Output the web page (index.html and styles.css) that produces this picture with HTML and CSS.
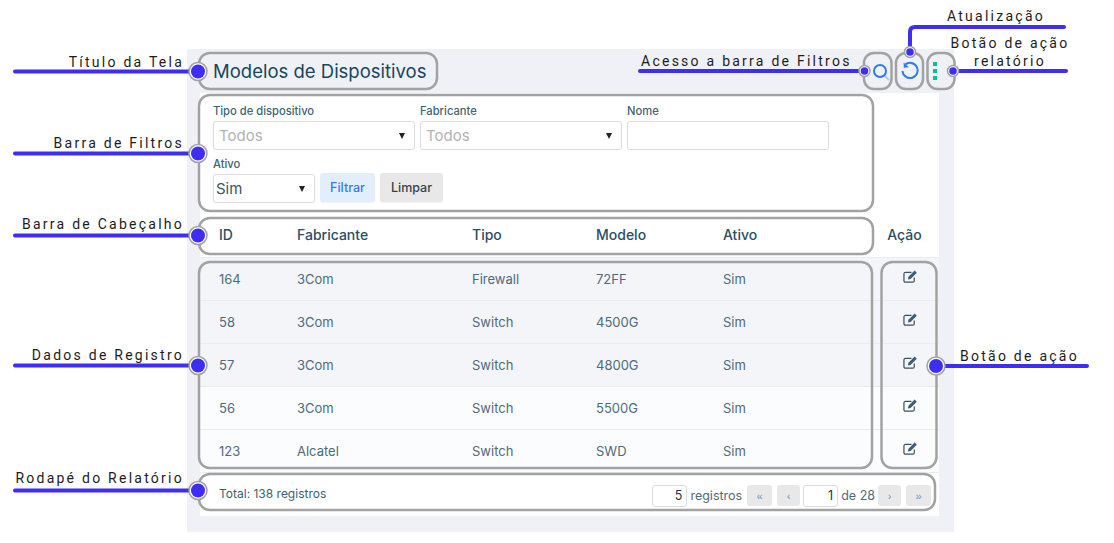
FILE: index.html
```html
<!DOCTYPE html>
<html lang="pt-BR">
<head>
  <meta charset="UTF-8">
  <title>Modelos de Dispositivos</title>
  <link rel="stylesheet" href="styles.css">
</head>
<body>
  <main class="panel">
    <header class="title-bar">
      <h1>Modelos de Dispositivos</h1>
      <div class="tools">
        <button type="button" class="tool tool-search" aria-label="Filtros">
          <svg class="tool-icon" width="20" height="20" viewBox="0 0 20 20" fill="none">
            <path d="M14.500 14.500l4.500 4.500" stroke="#b3caf2" stroke-width="1.800"/>
            <circle cx="10" cy="10" r="6" stroke="#2f7df0" stroke-width="2"/>
          </svg>
        </button>
        <button type="button" class="tool tool-refresh" aria-label="Atualizar">
          <svg width="20" height="20" viewBox="0 0 20 20" fill="none">
            <path d="M5.200 3.600A7.600 7.600 0 1 1 2.500 10" stroke="#2f7df0" stroke-width="2"/>
            <path d="M3.600 1.600l.2 5.200 5-.6z" fill="#2f7df0"/>
          </svg>
        </button>
        <button type="button" class="tool tool-more" aria-label="Mais">
          <span class="dot"></span><span class="dot"></span><span class="dot"></span>
        </button>
      </div>
    </header>

    <section class="card">
      <form class="filters">
        <div class="field">
          <label for="tipo">Tipo de dispositivo</label>
          <div class="select">
            <select id="tipo" class="empty"><option>Todos</option></select>
          </div>
        </div>
        <div class="field">
          <label for="fabricante">Fabricante</label>
          <div class="select">
            <select id="fabricante" class="empty"><option>Todos</option></select>
          </div>
        </div>
        <div class="field">
          <label for="nome">Nome</label>
          <input id="nome" type="text">
        </div>
        <div class="field field-small">
          <label for="ativo">Ativo</label>
          <div class="select">
            <select id="ativo"><option>Sim</option></select>
          </div>
        </div>
        <button type="button" class="btn btn-filter">Filtrar</button>
        <button type="button" class="btn btn-clear">Limpar</button>
      </form>

      <table class="grid">
        <colgroup>
          <col class="col-id"><col class="col-fab"><col class="col-tipo"><col class="col-modelo"><col class="col-ativo"><col class="col-acao">
        </colgroup>
        <thead>
          <tr><th>ID</th><th>Fabricante</th><th>Tipo</th><th>Modelo</th><th>Ativo</th><th class="action">Ação</th></tr>
        </thead>
        <tbody>
          <tr class="shade">
            <td>164</td><td>3Com</td><td>Firewall</td><td>72FF</td><td>Sim</td>
            <td class="action"><svg class="edit" viewBox="0 0 16 16"><use href="#edit"/></svg></td>
          </tr>
          <tr class="shade">
            <td>58</td><td>3Com</td><td>Switch</td><td>4500G</td><td>Sim</td>
            <td class="action"><svg class="edit" viewBox="0 0 16 16"><use href="#edit"/></svg></td>
          </tr>
          <tr class="shade">
            <td>57</td><td>3Com</td><td>Switch</td><td>4800G</td><td>Sim</td>
            <td class="action"><svg class="edit" viewBox="0 0 16 16"><use href="#edit"/></svg></td>
          </tr>
          <tr>
            <td>56</td><td>3Com</td><td>Switch</td><td>5500G</td><td>Sim</td>
            <td class="action"><svg class="edit" viewBox="0 0 16 16"><use href="#edit"/></svg></td>
          </tr>
          <tr>
            <td>123</td><td>Alcatel</td><td>Switch</td><td>SWD</td><td>Sim</td>
            <td class="action"><svg class="edit" viewBox="0 0 16 16"><use href="#edit"/></svg></td>
          </tr>
        </tbody>
      </table>

      <footer class="report-foot">
        <span class="total">Total: 138 registros</span>
        <div class="pager">
          <input class="num num-size" type="text" value="5" aria-label="Registros por página">
          <span class="pager-text">registros</span>
          <button type="button" class="page page-wide page-first">«</button>
          <button type="button" class="page">‹</button>
          <input class="num" type="text" value="1" aria-label="Página">
          <span class="pager-text">de 28</span>
          <button type="button" class="page">›</button>
          <button type="button" class="page page-wide page-last">»</button>
        </div>
      </footer>
    </section>
  </main>

  <svg class="defs" width="0" height="0">
    <symbol id="edit" viewBox="0 0 16 16">
      <path d="M12 9v3.500a1.600 1.600 0 0 1-1.600 1.600H2.600A1.600 1.600 0 0 1 1 12.500V5.300a1.600 1.600 0 0 1 1.600-1.600h6.400" fill="none" stroke="#3f4f5c" stroke-width="1.300"/>
      <path d="M5.800 8.300l6.600-6.600 2.300 2.300-6.600 6.600-2.900.6z" fill="#3a5f7a"/>
    </symbol>
  </svg>

  <!-- anotacoes por cima da tela -->
  <svg class="notes" width="1114" height="543" viewBox="0 0 1114 543">
    <g class="frames">
      <rect x="199" y="53" width="238" height="36" rx="11"/>
      <rect x="199" y="95" width="674" height="116" rx="11"/>
      <rect x="199" y="218" width="674" height="36" rx="11"/>
      <rect x="199" y="262" width="673" height="206" rx="11"/>
      <rect x="881.500" y="262" width="55" height="206" rx="11"/>
      <rect x="199" y="474" width="736" height="36" rx="11"/>
      <rect x="864" y="53" width="27.500" height="36" rx="10"/>
      <rect x="896" y="53" width="27" height="36" rx="10"/>
      <rect x="927.500" y="53" width="27" height="36" rx="10"/>
    </g>
    <g class="leads">
      <path d="M15 71.500H198M15 153.500H198M15 235.500H198M15 365.500H198M15 490.500H198M936 366H1087M640 71H864M953 71H1066M1064 27H915Q910 27 910 32V52"/>
    </g>
    <g class="rings">
      <circle cx="198" cy="71.500" r="9"/>
      <circle cx="198" cy="153.500" r="9"/>
      <circle cx="198" cy="235.500" r="9"/>
      <circle cx="198" cy="365.500" r="9"/>
      <circle cx="198" cy="490.500" r="9"/>
      <circle cx="936" cy="366" r="9"/>
      <circle cx="864.500" cy="71" r="5.500"/>
      <circle cx="910" cy="52" r="5.500"/>
      <circle cx="953" cy="71" r="5.500"/>
    </g>
    <g class="knobs">
      <circle cx="198" cy="71.500" r="7"/>
      <circle cx="198" cy="153.500" r="7"/>
      <circle cx="198" cy="235.500" r="7"/>
      <circle cx="198" cy="365.500" r="7"/>
      <circle cx="198" cy="490.500" r="7"/>
      <circle cx="936" cy="366" r="7"/>
      <circle cx="864.500" cy="71" r="3.800"/>
      <circle cx="910" cy="52" r="3.800"/>
      <circle cx="953" cy="71" r="3.800"/>
    </g>
    <g class="note-text">
      <text x="184" y="67" text-anchor="end">Título da Tela</text>
      <text x="184" y="148" text-anchor="end">Barra de Filtros</text>
      <text x="184" y="229" text-anchor="end">Barra de Cabeçalho</text>
      <text x="184" y="360" text-anchor="end">Dados de Registro</text>
      <text x="184" y="483" text-anchor="end">Rodapé do Relatório</text>
      <text x="641" y="66">Acesso a barra de Filtros</text>
      <text x="947" y="21">Atualização</text>
      <text x="1010" y="48" text-anchor="middle">Botão de ação</text>
      <text x="1010" y="66" text-anchor="middle">relatório</text>
      <text x="960" y="361">Botão de ação</text>
    </g>
  </svg>
</body>
</html>
```

FILE: styles.css
```css
:root {
  --panel: #f0f1f7;
  --line: #e9ecef;
  --text: #4f6b7a;
  --head: #2a4f63;
  --control: #dcdcdc;
  --lead: #3d2df5;
  --frame: #a2a2a2;
}

* {
  box-sizing: border-box;
}

html, body {
  margin: 0;
  height: 100%;
  overflow: hidden;
}

body {
  position: relative;
  background: #fff;
  color: var(--text);
  font-family: Inter, "Open Sans", sans-serif;
  font-size: 13px;
}

.panel {
  width: 767px;
  height: 483px;
  margin: 49px 0 0 187px;
  padding: 0 15px 16px 13px;
  background: var(--panel);
}

.title-bar {
  display: flex;
  align-items: center;
  height: 44px;
  margin-right: -15px;
  padding-left: 13px;
  padding-right: 9px;
}

.title-bar h1 {
  margin: 0;
  font-size: 18.500px;
  font-weight: 400;
  color: #17475d;
}

.tools {
  display: flex;
  align-items: center;
  margin-left: auto;
}

.tool {
  display: flex;
  flex-direction: column;
  align-items: center;
  justify-content: center;
  padding: 0;
  border: 0;
  background: none;
}

.tool-icon {
  overflow: visible;
}

.tool-search {
  width: 30px;
}

.tool-refresh {
  width: 28px;
  margin-left: 1px;
}

.tool-more {
  width: 20px;
  margin-left: 1px;
  gap: 3px;
}

.dot {
  width: 4px;
  height: 4px;
  background: #00c48f;
}

.card {
  height: 423px;
  background: #fff;
}

/* filtros */
.filters {
  display: flex;
  flex-wrap: wrap;
  align-items: flex-end;
  align-content: flex-start;
  gap: 7px 5px;
  height: 120px;
  padding: 11px 13px 10px;
}

.field {
  width: 202px;
}

.field-small {
  width: 102px;
}

.field label {
  display: block;
  height: 17px;
  font-size: 11.200px;
  font-weight: 500;
  line-height: 15px;
  color: #3f6475;
}

.select {
  position: relative;
}

.select::after {
  content: "";
  position: absolute;
  right: 10px;
  top: 12px;
  border-left: 3.500px solid transparent;
  border-right: 3.500px solid transparent;
  border-top: 6px solid #222;
  pointer-events: none;
}

select, .field input {
  display: block;
  width: 100%;
  height: 29px;
  border: 1px solid var(--control);
  border-radius: 3px;
  background: #fff;
  font-family: inherit;
}

select {
  appearance: none;
  padding: 0 0 0 2px;
  font-size: 15px;
  color: #3d5562;
}

select.empty {
  padding-left: 5px;
  color: #b3b3b3;
}

.btn {
  height: 29px;
  margin-bottom: 1px;
  padding: 0;
  border: 0;
  border-radius: 3px;
  font-family: inherit;
  font-size: 12.500px;
  font-weight: 500;
  box-shadow: 0 1px 2px rgba(0, 0, 0, 0.06);
}

.btn-filter {
  width: 55px;
  background: #e3eefc;
  color: #2f7df0;
}

.btn-clear {
  width: 63px;
  background: #e8e8e8;
  color: #35444c;
}

/* tabela */
.grid {
  width: 739px;
  border-collapse: collapse;
  table-layout: fixed;
}

.col-id { width: 78px; }
.col-fab { width: 175px; }
.col-tipo { width: 124px; }
.col-modelo { width: 127px; }
.col-ativo { width: 166px; }
.col-acao { width: 69px; }

.grid th, .grid td {
  height: 43px;
  padding: 0 0 0 19px;
  border-bottom: 1px solid var(--line);
  text-align: left;
}

.grid th {
  height: 44px;
  font-size: 14px;
  font-weight: 500;
  color: var(--head);
}

.grid td {
  font-size: 13px;
  font-weight: 400;
  background: #fbfcfe;
}

.grid .shade td {
  background: #f4f5f8;
}

.grid .action {
  padding: 0;
  text-align: center;
}

.grid td.action {
  padding-left: 11px;
}

.edit {
  display: block;
  width: 15px;
  height: 15px;
  margin: -4px auto 0;
}

.defs {
  position: absolute;
}

/* rodape */
.report-foot {
  display: flex;
  align-items: center;
  justify-content: space-between;
  height: 44px;
  padding: 0 8px 4px 19px;
}

.total {
  margin-top: 1px;
  font-size: 12px;
  color: #3d5f70;
}

.pager {
  display: flex;
  align-items: center;
  margin-top: 6px;
}

.pager-text {
  margin: 0 3px;
  font-size: 12.500px;
}

.num {
  width: 35px;
  height: 22px;
  padding: 0 4px;
  border: 1px solid var(--control);
  border-radius: 3px;
  background: #fff;
  font-family: inherit;
  font-size: 12.500px;
  color: #26343c;
  text-align: right;
}

.page {
  width: 23px;
  height: 21px;
  padding: 0;
  border: 0;
  border-radius: 3px;
  background: #e8e8e8;
  color: #5d9bc7;
  font-size: 11px;
}

.page-wide {
  width: 25px;
}

.page-first {
  margin: 0 5px 0 2px;
}

.page + .num {
  margin-left: 3px;
}

.page-last {
  margin-left: 5px;
}

/* anotacoes */
.notes {
  position: absolute;
  left: 0;
  top: 0;
}

.frames rect {
  fill: none;
  stroke: var(--frame);
  stroke-width: 2.500;
}

.leads path {
  fill: none;
  stroke: var(--lead);
  stroke-width: 4;
  stroke-linecap: round;
}

.rings circle {
  fill: #fff;
  stroke: var(--frame);
  stroke-width: 1.500;
}

.knobs circle {
  fill: var(--lead);
}

.note-text text {
  font-family: Roboto, sans-serif;
  font-size: 14px;
  letter-spacing: 2.250px;
  fill: #1c1c1c;
}
```
